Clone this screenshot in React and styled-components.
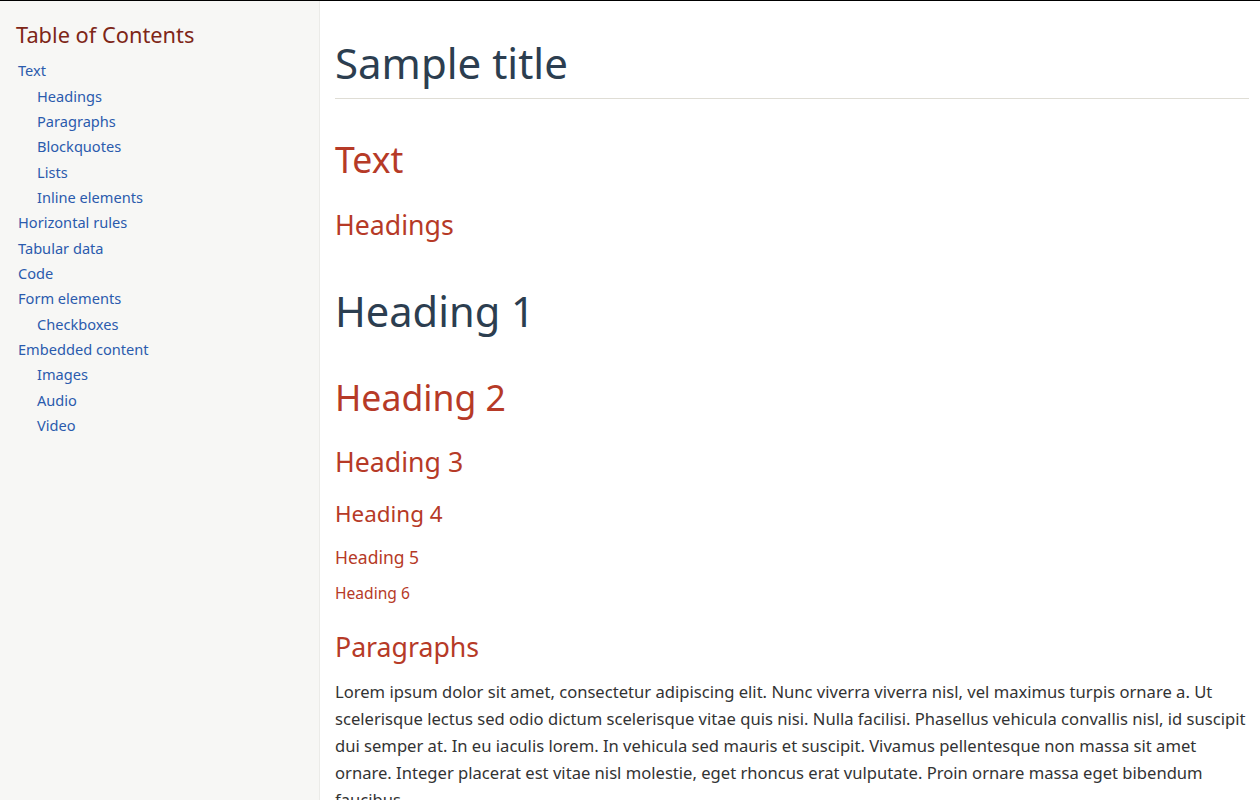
import React from "react";
import styled, { createGlobalStyle } from "styled-components";

const GlobalStyle = createGlobalStyle`
  html, body {
    margin: 0;
    padding: 0;
  }
  body {
    border-top: 1px solid #000;
    font-family: "Noto Sans", "Open Sans", sans-serif;
    color: #333;
    background: #fff;
  }
`;

const toc = [
  { label: "Text", children: ["Headings", "Paragraphs", "Blockquotes", "Lists", "Inline elements"] },
  { label: "Horizontal rules" },
  { label: "Tabular data" },
  { label: "Code" },
  { label: "Form elements", children: ["Checkboxes"] },
  { label: "Embedded content", children: ["Images", "Audio", "Video"] },
];

function App() {
  return (
    <>
      <GlobalStyle />
      <Layout>
        <Sidebar>
          <TocTitle>Table of Contents</TocTitle>
          <TocList>
            {toc.map((item) => (
              <li key={item.label}>
                <TocLink href="#">{item.label}</TocLink>
                {item.children && (
                  <TocList $nested>
                    {item.children.map((child) => (
                      <li key={child}>
                        <TocLink href="#">{child}</TocLink>
                      </li>
                    ))}
                  </TocList>
                )}
              </li>
            ))}
          </TocList>
        </Sidebar>
        <Main>
          <PageTitle>Sample title</PageTitle>
          <H2>Text</H2>
          <H3>Headings</H3>
          <H1>Heading 1</H1>
          <H2>Heading 2</H2>
          <H3>Heading 3</H3>
          <H4>Heading 4</H4>
          <H5>Heading 5</H5>
          <H6>Heading 6</H6>
          <H3 $section>Paragraphs</H3>
          <Paragraph>
            Lorem ipsum dolor sit amet, consectetur adipiscing elit. Nunc viverra viverra nisl, vel maximus
            turpis ornare a. Ut scelerisque lectus sed odio dictum scelerisque vitae quis nisi. Nulla facilisi.
            Phasellus vehicula convallis nisl, id suscipit dui semper at. In eu iaculis lorem. In vehicula sed
            mauris et suscipit. Vivamus pellentesque non massa sit amet ornare. Integer placerat est vitae nisl
            molestie, eget rhoncus erat vulputate. Proin ornare massa eget bibendum faucibus.
          </Paragraph>
        </Main>
      </Layout>
    </>
  );
}

export default App;

const Layout = styled.div`
  display: flex;
  height: calc(100vh - 1px);
  overflow: hidden;
`;

const Sidebar = styled.nav`
  flex: 0 0 303px;
  background: #f7f7f5;
  border-right: 1px solid #ebebe8;
  padding: 21px 0 0 16px;
`;

const TocTitle = styled.h2`
  margin: 0 0 10px;
  font-size: 21.8px;
  line-height: 1.2;
  font-weight: 400;
  color: #7e2617;
`;

const TocList = styled.ul`
  list-style: none;
  margin: 0;
  padding: 0 0 0 ${(p) => (p.$nested ? "19px" : "2px")};
  font-size: 14.6px;
  line-height: 25.36px;
`;

const TocLink = styled.a`
  color: #2b5bad;
  text-decoration: none;
`;

const Main = styled.main`
  flex: 1;
  padding: 37px 11px 0 15px;
  min-width: 0;
`;

const PageTitle = styled.h1`
  margin: 0;
  padding-bottom: 10px;
  border-bottom: 1px solid #dfddd5;
  font-size: 42px;
  line-height: 1.2;
  font-weight: 400;
  color: #2c3e50;
`;

const Heading = styled.div`
  font-weight: 400;
  line-height: 1.2;
  margin-bottom: 0;
  color: #b63a27;
`;

const H1 = styled(Heading).attrs({ as: "h1" })`
  font-size: 41.6px;
  margin-top: 46px;
  color: #2c3e50;
`;

const H2 = styled(Heading).attrs({ as: "h2" })`
  font-size: 35.6px;
  margin-top: 39px;
`;

const H3 = styled(Heading).attrs({ as: "h3" })`
  font-size: 26.7px;
  margin-top: ${(p) => (p.$section ? "29px" : "27.5px")};
`;

const H4 = styled(Heading).attrs({ as: "h4" })`
  font-size: 22.4px;
  margin-top: 23px;
`;

const H5 = styled(Heading).attrs({ as: "h5" })`
  font-size: 17.5px;
  margin-top: 19px;
`;

const H6 = styled(Heading).attrs({ as: "h6" })`
  font-size: 15.6px;
  margin-top: 16px;
`;

const Paragraph = styled.p`
  margin: 15px 0 0;
  font-size: 16.6px;
  line-height: 27px;
  color: #333;
`;
